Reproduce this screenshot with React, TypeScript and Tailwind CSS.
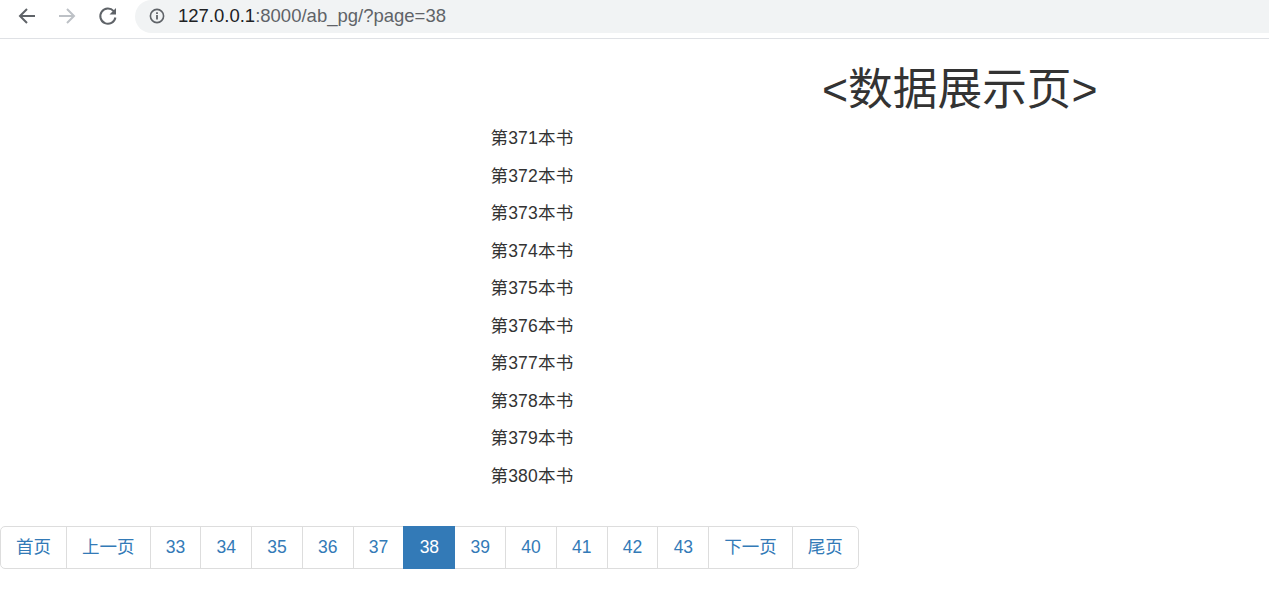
const FONT = "font-['Liberation_Sans','Noto_Sans_CJK_SC',sans-serif]";

const BOOKS = [371, 372, 373, 374, 375, 376, 377, 378, 379, 380];
const PAGES = ['首页', '上一页', '33', '34', '35', '36', '37', '38', '39', '40', '41', '42', '43', '下一页', '尾页'];

function Toolbar() {
  return (
    <div className="flex h-[39px] items-start border-b border-[#dfe1e5] bg-white">
      <div className="flex h-[31px] w-[135px] shrink-0 items-center">
        {/* back */}
        <svg className="ml-[17px] h-5 w-5" viewBox="0 0 20 20" fill="none" stroke="#5f6368" strokeWidth="2">
          <path d="M18 10H3M10 3l-7 7 7 7" />
        </svg>
        {/* forward */}
        <svg className="ml-5 h-5 w-5" viewBox="0 0 20 20" fill="none" stroke="#bdc1c6" strokeWidth="2">
          <path d="M2 10h15M10 3l7 7-7 7" />
        </svg>
        {/* reload */}
        <svg className="ml-[21px] h-5 w-5" viewBox="0 0 20 20" fill="none">
          <path d="M15.7 5.2A7.6 7.6 0 1 0 17.4 11.5" stroke="#5f6368" strokeWidth="2" />
          <path d="M18 2v6.5h-6.5z" fill="#5f6368" />
        </svg>
      </div>
      <div className="flex h-[33px] flex-1 items-center rounded-l-[17px] bg-[#f1f3f4] pl-[14px]">
        <svg className="h-4 w-4 -translate-y-px" viewBox="0 0 16 16" fill="none">
          <circle cx="8" cy="8" r="6.6" stroke="#5f6368" strokeWidth="1.6" />
          <path d="M8 7v4.5M8 4.2v1.7" stroke="#5f6368" strokeWidth="1.8" />
        </svg>
        <span className="ml-[13px] -translate-y-px text-[18.5px] whitespace-nowrap text-[#5f6368]">
          <span className="text-[#202124]">127.0.0.1</span>:8000/ab_pg/?page=38
        </span>
      </div>
    </div>
  );
}

export default function App() {
  return (
    <div className={`${FONT} min-h-[600px] bg-white text-[17.5px] leading-[25px] text-[#333]`}>
      <Toolbar />
      <h1 className="mt-[26px] mb-[11px] pl-[822px] text-[44.7px] leading-[50px] font-normal whitespace-nowrap">
        &lt;数据展示页&gt;
      </h1>
      <div className="w-[1064px] text-center">
        {BOOKS.map((n) => (
          <p key={n} className="mb-[12.5px] tracking-[0.25px]">第{n}本书</p>
        ))}
      </div>
      <ul className="mt-[37px] flex w-fit rounded-[5px]">
        {PAGES.map((label) => {
          const active = label === '38';
          const numeric = label.length === 2 && label >= '0' && label <= '99';
          return (
            <li
              key={label}
              className={`-ml-px h-[43px] border py-[8px] text-center first:ml-0 first:rounded-l-[5px] last:rounded-r-[5px] ${
                numeric ? 'w-[51.8px]' : 'px-[15px]'
              } ${
                active
                  ? 'relative z-10 border-[#337ab7] bg-[#337ab7] text-white'
                  : 'border-[#ddd] bg-white text-[#337ab7]'
              }`}
            >
              {label}
            </li>
          );
        })}
      </ul>
    </div>
  );
}
